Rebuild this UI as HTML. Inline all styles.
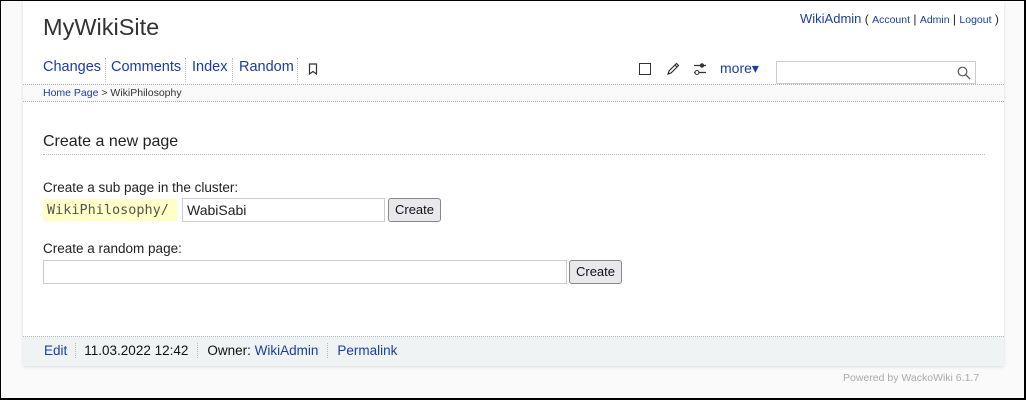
<!DOCTYPE html>
<html><head><meta charset="utf-8"><style>
*{box-sizing:border-box;margin:0;padding:0}
html,body{width:1026px;height:400px;overflow:hidden}
body{background:#fafafa;font-family:"Liberation Sans",sans-serif;color:#222;position:relative;box-shadow:inset 1px 1px 0 #000,inset -2px -2px 0 #000}
a{color:#1a3ea0;text-decoration:none}
#box{position:absolute;left:23px;top:1px;width:981px;height:365px;background:#fff;box-shadow:0 1px 3px rgba(0,0,0,.12)}
.abs{position:absolute;white-space:nowrap}
.dl{position:absolute;left:0;width:981px;border-top:1px dotted #aaa}
.btn{position:absolute;height:24px;border:1px solid #888;border-radius:3px;background:#e9e9ed;font-size:13px;color:#111;text-align:center;line-height:22px}
.inp{position:absolute;height:24px;border:1px solid #ccc;background:#fff;font-size:14px;line-height:22px;padding-left:4px}
.sep{border-left:1px dotted #bbb}
</style></head><body>
<div id="box">
<div class="abs" style="left:20px;top:13px;font-size:23.5px;color:#333">MyWikiSite</div>
<div class="abs" style="left:777px;top:10px;font-size:12px;color:#222"><a style="font-size:13px">WikiAdmin</a> ( <a style="font-size:10.5px">Account</a> | <a style="font-size:10.5px">Admin</a> | <a style="font-size:10.5px">Logout</a> )</div>
<div class="abs" style="left:20px;top:58px;font-size:14.5px;height:24px">
<a style="position:absolute;left:0">Changes</a>
<span class="sep" style="position:absolute;left:62px;height:24px;top:-1px"></span>
<a style="position:absolute;left:68px">Comments</a>
<span class="sep" style="position:absolute;left:142px;height:24px;top:-1px"></span>
<a style="position:absolute;left:149px">Index</a>
<span class="sep" style="position:absolute;left:189px;height:24px;top:-1px"></span>
<a style="position:absolute;left:196px">Random</a>
<span class="sep" style="position:absolute;left:254px;height:24px;top:-1px"></span>
<svg style="position:absolute;left:265px;top:4px" width="10" height="12" viewBox="0 0 10 12"><path d="M1.5 1h7v10L5 8.5 1.5 11z" fill="none" stroke="#333" stroke-width="1.2"/></svg>
</div>
<svg class="abs" style="left:616px;top:62px" width="12" height="12"><rect x=".5" y=".5" width="11" height="11" fill="none" stroke="#333"/></svg>
<svg class="abs" style="left:643px;top:61px" width="14" height="14" viewBox="0 0 14 14"><path d="M2 12l1-3 6-6 2 2-6 6z M9 3l1.5-1.5 2 2L11 5" fill="none" stroke="#333" stroke-width="1.2"/></svg>
<svg class="abs" style="left:670px;top:60px" width="14" height="16" viewBox="0 0 14 16"><path d="M1 4.5h12M1 11.5h12" stroke="#333" stroke-width="1.2"/><circle cx="9" cy="4.5" r="2.2" fill="#333"/><circle cx="4" cy="11.5" r="2" fill="#fff" stroke="#333" stroke-width="1.1"/></svg>
<div class="abs" style="left:697px;top:59px;font-size:14px"><a>more▾</a></div>
<div class="abs" style="left:753px;top:60px;width:200px;height:23px;border:1px solid #ccc;background:#fff">
<svg style="position:absolute;right:4px;top:4px" width="14" height="14" viewBox="0 0 14 14"><circle cx="5.5" cy="5.5" r="4.3" fill="none" stroke="#555" stroke-width="1.2"/><path d="M8.7 8.7L13 13" stroke="#555" stroke-width="1.3"/></svg></div>
<div class="dl" style="top:83px"></div>
<div style="position:absolute;left:0;top:84px;width:981px;height:16px;background:#fafafa"></div>
<div class="abs" style="left:20px;top:86px;font-size:10.5px;color:#333"><a>Home Page</a> &gt; WikiPhilosophy</div>
<div class="dl" style="top:100px"></div>
<div class="abs" style="left:20px;top:132px;font-size:16px;color:#222">Create a new page</div>
<div class="abs" style="left:20px;top:153px;width:942px;border-top:1px dotted #bbb"></div>
<div class="abs" style="left:20px;top:179px;font-size:13.5px">Create a sub page in the cluster:</div>
<div class="abs" style="left:20px;top:198px;width:134px;height:22px;background:#ffffc8;font-family:'DejaVu Sans Mono',monospace;font-size:13.5px;line-height:22px;padding-left:4px;color:#555;overflow:hidden">WikiPhilosophy/</div>
<div class="inp" style="left:159px;top:197px;width:203px">WabiSabi</div>
<div class="btn" style="left:365px;top:197px;width:53px">Create</div>
<div class="abs" style="left:20px;top:240px;font-size:13.5px">Create a random page:</div>
<div class="inp" style="left:20px;top:259px;width:524px"></div>
<div class="btn" style="left:546px;top:259px;width:53px">Create</div>
<div style="position:absolute;left:0;top:335px;width:981px;height:30px;background:#f0f3f4;border-top:1px dotted #bbb"></div>
<div class="abs" style="left:21px;top:342px;font-size:13.5px;color:#111">
<a>Edit</a><span class="sep" style="margin:0 8px 0 8px"></span>11.03.2022 12:42<span class="sep" style="margin:0 9px 0 9px"></span>Owner: <a>WikiAdmin</a><span class="sep" style="margin:0 9px 0 9px"></span><a>Permalink</a>
</div>
</div>
<div class="abs" style="left:843px;top:372px;font-size:10.5px;color:#aaa">Powered by WackoWiki 6.1.7</div>
</body></html>
